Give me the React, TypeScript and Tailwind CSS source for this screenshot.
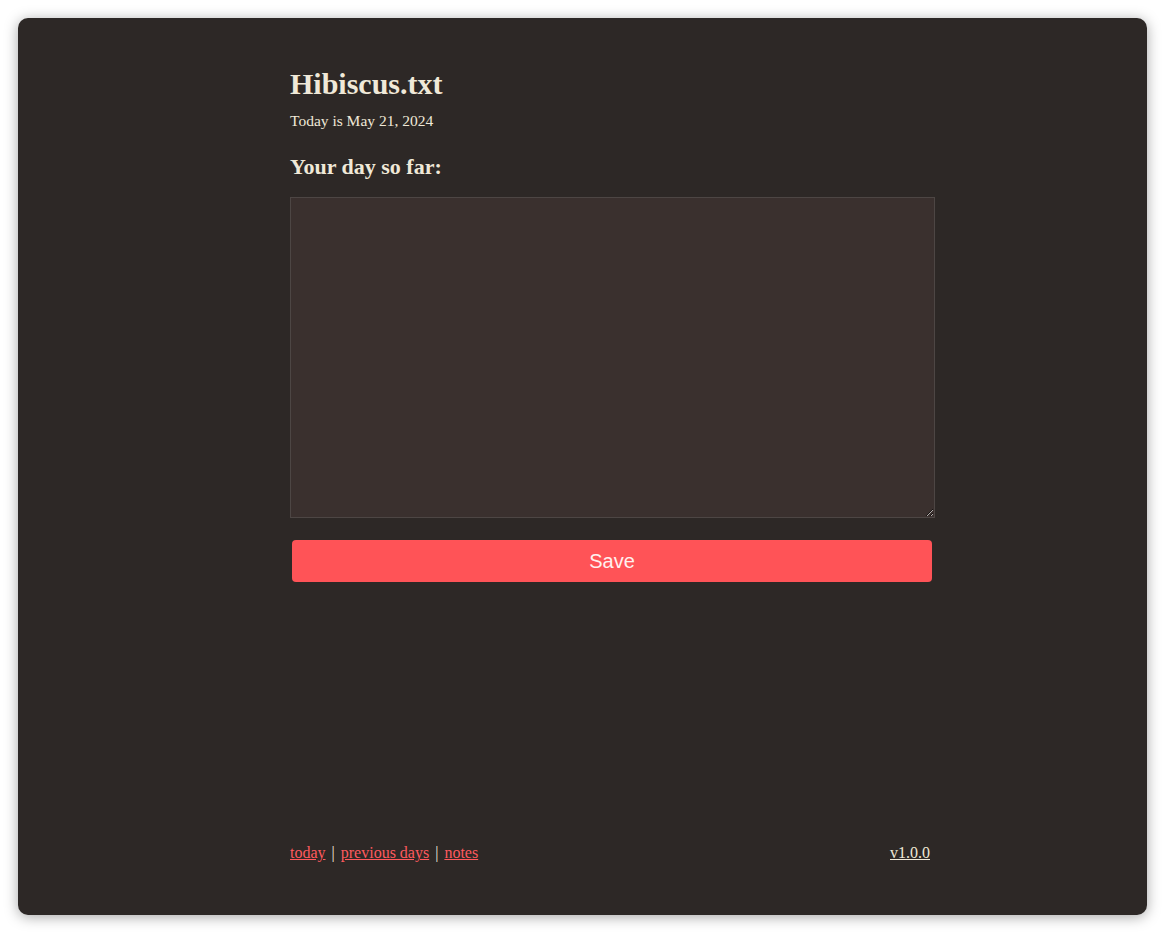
export default function App() {
    const serif = { fontFamily: '"Liberation Serif", "DejaVu Serif", serif' }
    return (
        <div className="w-[1165px] h-[933px] bg-white p-[18px]">
            <div
                className="h-full w-full rounded-[10px] bg-[#2d2826] shadow-[0_2px_14px_rgba(0,0,0,0.35)] flex flex-col pl-[272px] pr-[212px] pt-[48px] pb-[52px]"
                style={serif}
            >
                <h1 className="text-[30px] leading-[36px] font-bold text-[#f0e9d8]">Hibiscus.txt</h1>
                <p className="text-[15.5px] leading-[20px] mt-[9px] text-[#f0e9d8]">Today is May 21, 2024</p>
                <h2 className="text-[22px] leading-[28px] font-bold text-[#f0e9d8] mt-[22px]">Your day so far:</h2>
                <textarea
                    className="mt-[16px] h-[321px] w-full bg-[#3a302e] border border-[#4d4644] outline-none text-[#f0e9d8] p-2 resize-y"
                />
                <div className="pl-[2px] pr-[3px] mt-[22px]">
                    <button
                        className="w-full h-[42px] rounded-[4px] bg-[#ff5357] text-[#fff0ee] text-[20px]"
                        style={{ fontFamily: '"Liberation Sans", Arial, sans-serif' }}
                    >
                        Save
                    </button>
                </div>
                <div className="flex-1" />
                <div className="flex items-center justify-between pr-[5px] text-[16px] leading-[20px]">
                    <div className="flex items-center text-[#f0e9d8]">
                        <a href="#" className="text-[#ff5a5e] underline">today</a>
                        <span className="mx-[6px]">|</span>
                        <a href="#" className="text-[#ff5a5e] underline">previous days</a>
                        <span className="mx-[6px]">|</span>
                        <a href="#" className="text-[#ff5a5e] underline">notes</a>
                    </div>
                    <a href="#" className="text-[#f0e9d8] underline">v1.0.0</a>
                </div>
            </div>
        </div>
    )
}
